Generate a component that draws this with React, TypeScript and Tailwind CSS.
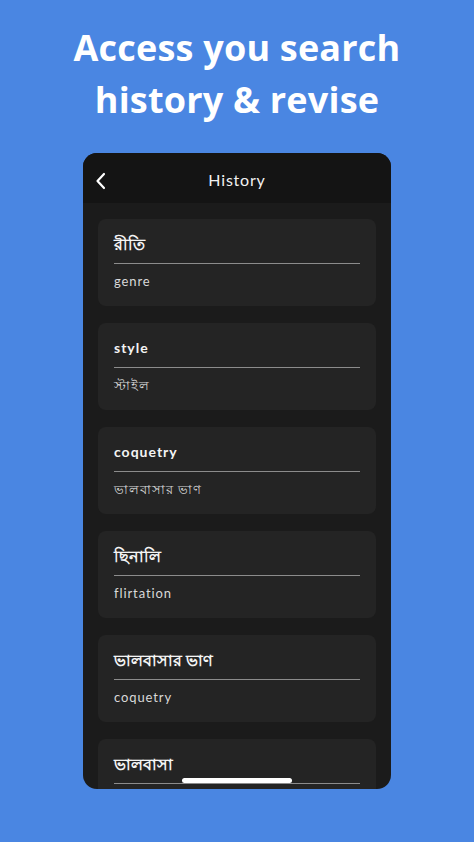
import React from 'react';

const items = [
  { title: 'রীতি', sub: 'genre', bnTitle: true },
  { title: 'style', sub: 'স্টাইল', bnTitle: false },
  { title: 'coquetry', sub: 'ভালবাসার ভাণ', bnTitle: false },
  { title: 'ছিনালি', sub: 'flirtation', bnTitle: true },
  { title: 'ভালবাসার ভাণ', sub: 'coquetry', bnTitle: true },
  { title: 'ভালবাসা', sub: '', bnTitle: true },
];

export default function App() {
  return (
    <div className="w-[474px] h-[842px] bg-[#4a86e2] overflow-hidden flex flex-col items-center font-['Open_Sans',sans-serif]">
      {/* Headline */}
      <h1 className="pt-[22px] text-center text-white font-bold text-[36px] leading-[52px] tracking-[0.2px]">
        Access you search
        <br />
        history &amp; revise
      </h1>

      {/* Phone */}
      <div className="relative mt-[27px] w-[308px] h-[636px] rounded-[14px] overflow-hidden bg-[#1b1b1b] flex flex-col font-['Lato','Noto_Sans',sans-serif]">
        <div className="relative h-[50px] shrink-0 bg-[#141414] flex items-center justify-center pt-[4px]">
          <svg
            className="absolute left-[11px] top-[19px]"
            width="14"
            height="18"
            viewBox="0 0 14 18"
            fill="none"
          >
            <path d="M10 2 L3.5 9 L10 16" stroke="white" strokeWidth="2.2" strokeLinecap="round" strokeLinejoin="round" />
          </svg>
          <span className="text-[#f2f2f2] text-[16px] tracking-[0.8px]">History</span>
        </div>

        <div className="flex-1 overflow-hidden px-[15px] pt-4 flex flex-col gap-[17px]">
          {items.map((it, i) => (
            <div key={i} className="shrink-0 rounded-[8px] bg-[#242424] px-4 pt-[14px] pb-4">
              <div
                className={
                  it.bnTitle
                    ? 'text-[#f4f4f4] text-[16px] font-semibold leading-[22px]'
                    : 'text-[#f4f4f4] text-[14px] font-bold leading-[22px] tracking-[1px]'
                }
              >
                {it.title}
              </div>
              <div className="mt-2 h-px bg-[#8c8c8c]" />
              {it.sub && (
                <div className="mt-2 text-[#d9d9d9] text-[13px] leading-[18px] tracking-[0.9px]">{it.sub}</div>
              )}
            </div>
          ))}
        </div>

        {/* Home indicator */}
        <div className="absolute bottom-[6px] left-1/2 -translate-x-1/2 w-[110px] h-[5px] rounded-full bg-white" />
      </div>
    </div>
  );
}
